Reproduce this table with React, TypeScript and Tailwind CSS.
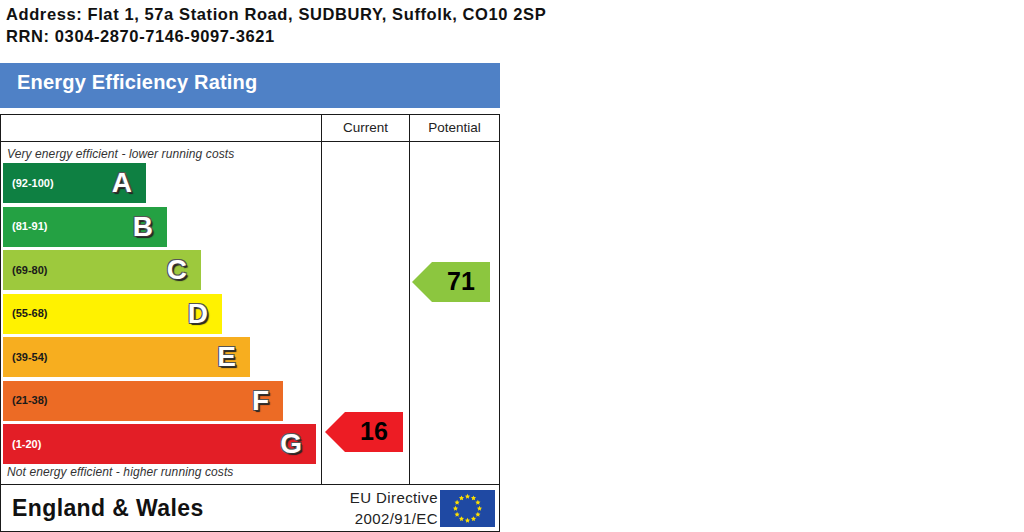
const bands = [
  { range: '(92-100)', letter: 'A', width: 'w-[143px]', color: 'bg-[#0e8042]', label: 'text-white' },
  { range: '(81-91)', letter: 'B', width: 'w-[164px]', color: 'bg-[#24a143]', label: 'text-white' },
  { range: '(69-80)', letter: 'C', width: 'w-[198px]', color: 'bg-[#9dc93d]', label: 'text-[#1a1a1a]' },
  { range: '(55-68)', letter: 'D', width: 'w-[219px]', color: 'bg-[#fff200]', label: 'text-[#1a1a1a]' },
  { range: '(39-54)', letter: 'E', width: 'w-[247px]', color: 'bg-[#f7ae1f]', label: 'text-[#1a1a1a]' },
  { range: '(21-38)', letter: 'F', width: 'w-[280px]', color: 'bg-[#ec6b25]', label: 'text-[#1a1a1a]' },
  { range: '(1-20)', letter: 'G', width: 'w-[313px]', color: 'bg-[#e31e26]', label: 'text-white' },
];

function EuFlag() {
  const stars = Array.from({ length: 12 }, (_, i) => {
    const a = (i * Math.PI) / 6;
    return { x: 27.5 + Math.sin(a) * 12, y: 18.5 - Math.cos(a) * 12 };
  });
  return (
    <svg width="55" height="37" viewBox="0 0 55 37">
      <rect width="55" height="37" fill="#1f49a3" />
      {stars.map((s, i) => (
        <polygon
          key={i}
          fill="#ffe000"
          points={[0, 1, 2, 3, 4, 5, 6, 7, 8, 9]
            .map((k) => {
              const r = k % 2 === 0 ? 2.7 : 1.3;
              const t = (k * Math.PI) / 5;
              return `${s.x + Math.sin(t) * r},${s.y - Math.cos(t) * r}`;
            })
            .join(' ')}
        />
      ))}
    </svg>
  );
}

function Arrow({ value, color }: { value: string; color: string }) {
  return (
    <div
      className={`flex h-[40px] w-[78px] items-center justify-center pl-[20px] text-[25px] font-bold text-black ${color}`}
      style={{ clipPath: 'polygon(0 50%, 20px 0, 100% 0, 100% 100%, 20px 100%)' }}
    >
      {value}
    </div>
  );
}

export default function App() {
  return (
    <div className="min-h-[532px] w-[1024px] bg-white font-['Liberation_Sans',Arial,sans-serif] text-[#111]">
      <div className="px-[6px] pt-[3px] text-[16.5px] font-bold leading-[22px] tracking-[0.6px]">
        <div>Address: Flat 1, 57a Station Road, SUDBURY, Suffolk, CO10 2SP</div>
        <div>RRN: 0304-2870-7146-9097-3621</div>
      </div>

      <div className="mt-[16px] h-[45px] w-[500px] bg-[#4f81c6] pl-[17px] pt-[8px] text-[20px] font-bold leading-[22px] tracking-[0.2px] text-white">
        Energy Efficiency Rating
      </div>

      <div className="mt-[6px] w-[500px] border border-[#1a1a1a]">
        <div className="flex h-[27px] border-b border-[#1a1a1a] text-[13.5px] text-[#222]">
          <div className="w-[320px]" />
          <div className="flex w-[88px] items-center justify-center border-l border-[#1a1a1a]">Current</div>
          <div className="flex w-[90px] items-center justify-center border-l border-[#1a1a1a]">Potential</div>
        </div>

        <div className="flex h-[343px] border-b border-[#1a1a1a]">
          <div className="flex w-[320px] flex-col pl-[2px] pt-[5px]">
            <div className="pl-[4px] text-[12px] italic leading-[14px] tracking-[0.1px] text-[#333]">
              Very energy efficient - lower running costs
            </div>
            <div className="mt-[2px] flex flex-col gap-[3.5px]">
              {bands.map((b) => (
                <div key={b.letter} className={`flex h-[40px] items-center justify-between pl-[9px] pr-[14px] ${b.width} ${b.color}`}>
                  <span className={`text-[11px] font-bold ${b.label}`}>{b.range}</span>
                  <span className="text-[28px] font-bold leading-none text-white [text-shadow:1px_1px_0_#333,-1px_-1px_0_#555,1px_-1px_0_#555,-1px_1px_0_#555,2px_2px_1px_#222]">
                    {b.letter}
                  </span>
                </div>
              ))}
            </div>
            <div className="mt-[1px] pl-[4px] text-[12px] italic leading-[14px] tracking-[0.1px] text-[#333]">
              Not energy efficient - higher running costs
            </div>
          </div>
          <div className="w-[88px] border-l border-[#1a1a1a] pl-[3px] pt-[270px]">
            <Arrow value="16" color="bg-[#ed1c24]" />
          </div>
          <div className="w-[90px] border-l border-[#1a1a1a] pl-[2px] pt-[120px]">
            <Arrow value="71" color="bg-[#8cc63f]" />
          </div>
        </div>

        <div className="flex h-[46px] items-center justify-between pl-[11px] pr-[4px]">
          <div className="text-[23px] font-bold tracking-[0.4px] text-[#111]">England &amp; Wales</div>
          <div className="flex items-center gap-[2px]">
            <div className="text-right text-[15px] leading-[21px] tracking-[0.4px] text-[#222]">
              <div>EU Directive</div>
              <div>2002/91/EC</div>
            </div>
            <EuFlag />
          </div>
        </div>
      </div>
    </div>
  );
}
